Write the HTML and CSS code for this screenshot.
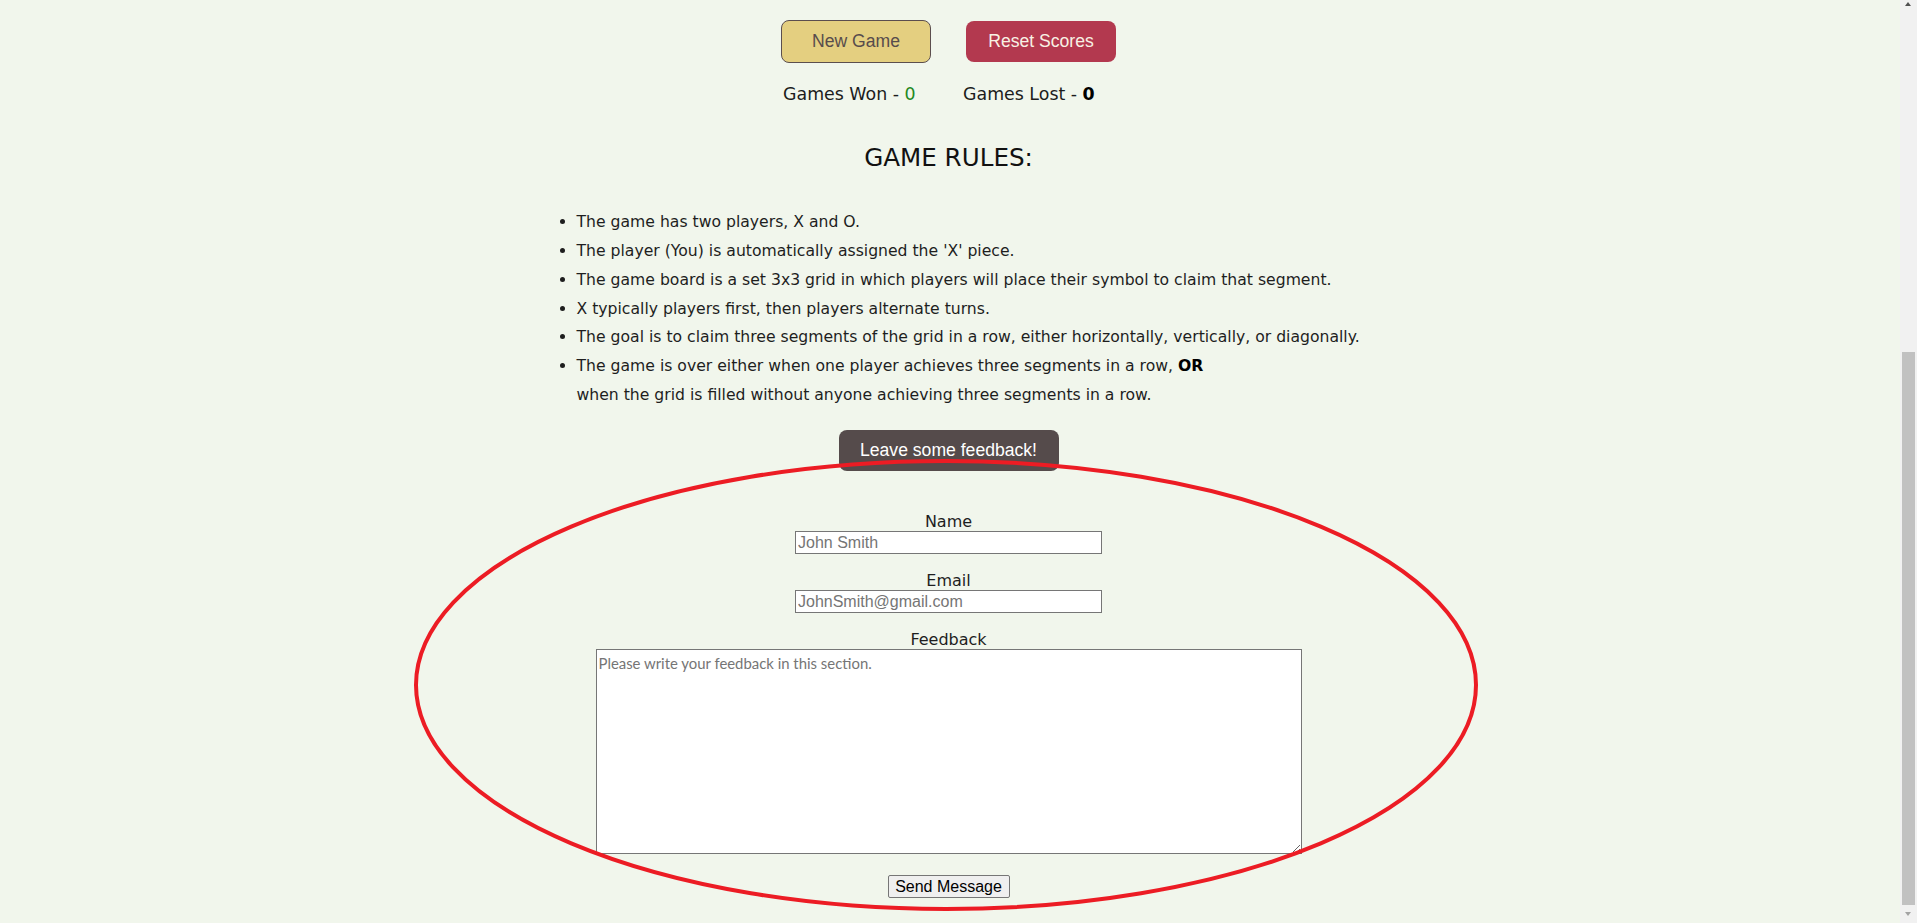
FILE: index.html
```html
<!DOCTYPE html>
<html lang="en">
<head>
<meta charset="utf-8">
<title>Tic Tac Toe</title>
<link rel="stylesheet" href="styles.css">
</head>
<body>
<div class="page">
  <section class="controls">
    <div class="control-col">
      <button class="btn btn-new" type="button">New Game</button>
      <p class="score score-won">Games Won - <span class="won">0</span></p>
    </div>
    <div class="control-col">
      <button class="btn btn-reset" type="button">Reset Scores</button>
      <p class="score score-lost">Games Lost - <span class="lost">0</span></p>
    </div>
  </section>

  <section class="rules">
    <h2>GAME RULES:</h2>
    <ul>
      <li>The game has two players, X and O.</li>
      <li>The player (You) is automatically assigned the 'X' piece.</li>
      <li>The game board is a set 3x3 grid in which players will place their symbol to claim that segment.</li>
      <li>X typically players first, then players alternate turns.</li>
      <li>The goal is to claim three segments of the grid in a row, either horizontally, vertically, or diagonally.</li>
      <li>The game is over either when one player achieves three segments in a row, <strong>OR</strong><br>when the grid is filled without anyone achieving three segments in a row.</li>
    </ul>
  </section>

  <section class="feedback">
    <button class="btn btn-feedback" type="button">Leave some feedback!</button>
    <form class="feedback-form">
      <label for="name">Name</label>
      <input class="field" id="name" type="text" placeholder="John Smith">
      <label for="email">Email</label>
      <input class="field field-email" id="email" type="email" placeholder="JohnSmith@gmail.com">
      <label for="message">Feedback</label>
      <textarea id="message" class="message" placeholder="Please write your feedback in this section."></textarea>
      <button class="send" type="button">Send Message</button>
    </form>
  </section>

  <svg class="annotation" width="1900" height="923" viewBox="0 0 1900 923">
    <ellipse cx="946" cy="685" rx="530" ry="224" fill="none" stroke="#ec1c24" stroke-width="4"/>
  </svg>
</div>
<div class="scrollbar">
  <span class="arrow arrow-up"></span>
  <span class="thumb"></span>
  <span class="arrow arrow-down"></span>
</div>
</body>
</html>
```

FILE: styles.css
```css
* {
  box-sizing: border-box;
}

html,
body {
  margin: 0;
  padding: 0;
}

body {
  background: #f1f6ec;
  font-family: "DejaVu Sans", sans-serif;
  color: #1e1e1e;
  overflow: hidden;
}

.page {
  position: relative;
  width: 1897px;
  height: 923px;
}

/* Controls */
.controls {
  display: flex;
  justify-content: center;
  gap: 35px;
  padding-top: 20px;
}

.control-col {
  display: flex;
  flex-direction: column;
  align-items: flex-start;
  width: 150px;
}

.btn {
  font-family: "Liberation Sans", Arial, sans-serif;
  font-size: 17.6px;
  border-radius: 8px;
  padding: 0;
  cursor: pointer;
}

.btn-new {
  width: 150px;
  height: 43px;
  background: #e4cf80;
  border: 1px solid #5b4e4e;
  color: #574c4c;
}

.btn-reset {
  width: 150px;
  height: 41px;
  margin: 1px 0;
  background: #b3394f;
  border: none;
  color: #f8f1e4;
}

.score {
  margin: 19px 0 0;
  font-size: 17.4px;
  line-height: 24px;
  white-space: nowrap;
  color: #1c1c1c;
}

.score-won {
  padding-left: 2px;
}

.score-lost {
  margin-left: -3px;
}

.won {
  color: #1f8a1f;
}

.lost {
  color: #000;
  font-weight: bold;
}

/* Rules */
.rules h2 {
  margin: 36.5px 0 0;
  text-align: center;
  font-size: 24.6px;
  line-height: 30px;
  font-weight: normal;
  color: #111;
}

.rules ul {
  width: 836px;
  margin: 35.5px auto 0;
  padding-left: 46px;
  font-size: 15.65px;
  line-height: 28.85px;
}

.rules li {
  white-space: nowrap;
}

.rules strong {
  color: #000;
  font-weight: 600;
}

/* Feedback */
.btn-feedback {
  display: block;
  margin: 20.3px auto 0;
  width: 220px;
  height: 41px;
  background: #554b4b;
  color: #fff;
  border: none;
}

.feedback-form {
  display: flex;
  flex-direction: column;
  align-items: center;
  margin-top: 41px;
}

.feedback-form label {
  font-size: 16px;
  line-height: 19px;
  color: #1e1e1e;
}

.field {
  width: 307px;
  height: 23px;
  border: 1px solid #767676;
  padding: 0 2px;
  margin: 0 0 17px;
  background: #fff;
  font-family: "Liberation Sans", Arial, sans-serif;
  font-size: 16px;
}

.field-email {
  margin-bottom: 17px;
}

.field::placeholder,
.message::placeholder {
  color: #757575;
}

.message {
  display: block;
  width: 706px;
  height: 205px;
  border: 1px solid #767676;
  padding: 4px 2px 2px;
  margin: 0 0 21px;
  background: #fff;
  font-family: Lato, sans-serif;
  font-size: 14.9px;
}

.send {
  width: 122px;
  height: 23px;
  padding: 0;
  font-family: "Liberation Sans", Arial, sans-serif;
  font-size: 16px;
  color: #000;
  background: #efefef;
  border: 1px solid #767676;
  border-radius: 2px;
}

/* Annotation overlay */
.annotation {
  position: absolute;
  top: 0;
  left: 0;
  pointer-events: none;
}

/* Fake browser scrollbar */
.scrollbar {
  position: fixed;
  top: 0;
  right: 0;
  width: 17px;
  height: 923px;
  background: #f1f1f1;
}

.thumb {
  position: absolute;
  left: 2px;
  right: 2px;
  top: 352px;
  height: 553px;
  background: #c1c1c1;
}

.arrow {
  position: absolute;
  left: 5px;
  width: 0;
  height: 0;
  border-left: 3.5px solid transparent;
  border-right: 3.5px solid transparent;
}

.arrow-up {
  top: 2px;
  border-bottom: 4px solid #505050;
}

.arrow-down {
  top: 912px;
  border-top: 4px solid #a3a3a3;
}
```
